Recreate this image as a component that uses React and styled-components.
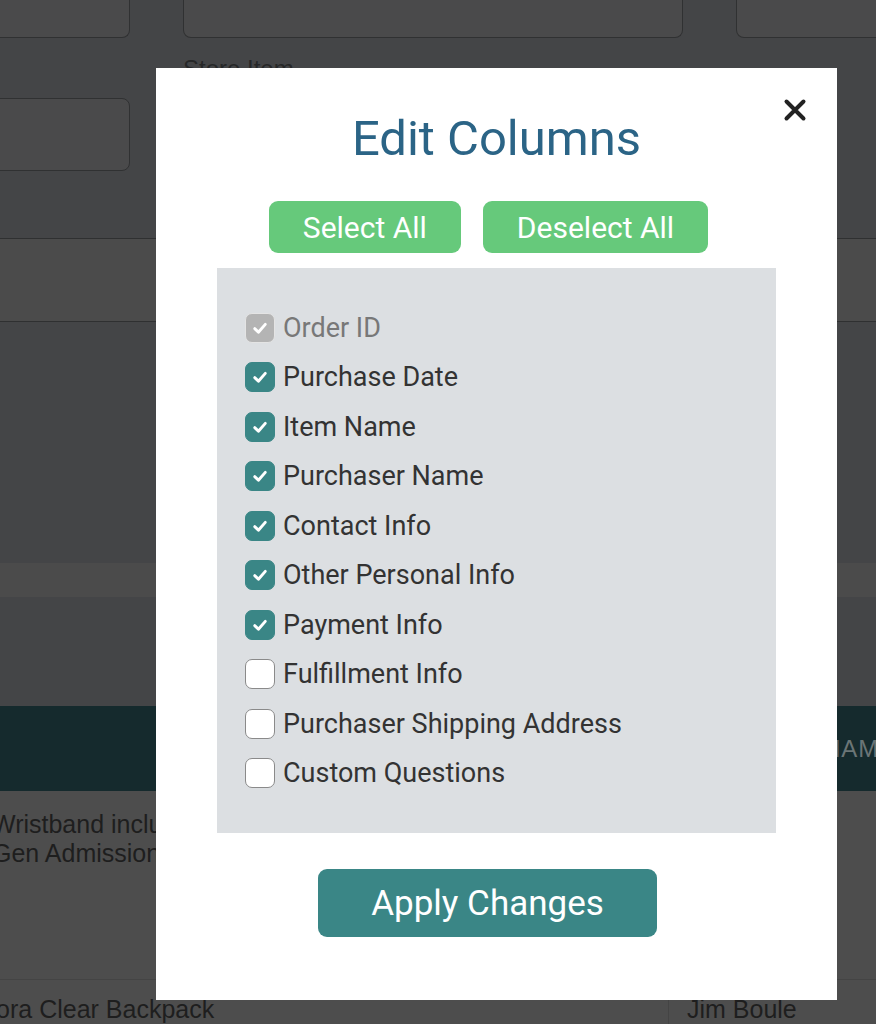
import styled, { createGlobalStyle } from "styled-components";
import { useState } from "react";

const GlobalStyle = createGlobalStyle`
  html, body {
    margin: 0;
    padding: 0;
    background: #444547;
    overflow: hidden;
  }
  * {
    box-sizing: border-box;
  }
`;

const COLUMNS = [
  { id: "orderId", label: "Order ID", locked: true },
  { id: "purchaseDate", label: "Purchase Date" },
  { id: "itemName", label: "Item Name" },
  { id: "purchaserName", label: "Purchaser Name" },
  { id: "contactInfo", label: "Contact Info" },
  { id: "otherPersonal", label: "Other Personal Info" },
  { id: "paymentInfo", label: "Payment Info" },
  { id: "fulfillment", label: "Fulfillment Info" },
  { id: "shipping", label: "Purchaser Shipping Address" },
  { id: "custom", label: "Custom Questions" },
];

const INITIAL = {
  orderId: true,
  purchaseDate: true,
  itemName: true,
  purchaserName: true,
  contactInfo: true,
  otherPersonal: true,
  paymentInfo: true,
  fulfillment: false,
  shipping: false,
  custom: false,
};

const CheckIcon = () => (
  <svg width="18" height="18" viewBox="0 0 16 16">
    <polyline
      points="3.3,8.6 6.6,11.7 12.7,4.8"
      fill="none"
      stroke="#fff"
      strokeWidth="2.6"
      strokeLinecap="round"
      strokeLinejoin="round"
    />
  </svg>
);

const App = () => {
  const [checked, setChecked] = useState(INITIAL);

  const toggle = (id) => {
    setChecked((prev) => ({ ...prev, [id]: !prev[id] }));
  };

  const setAll = (value) => {
    const next = {};
    COLUMNS.forEach((c) => (next[c.id] = c.locked ? true : value));
    setChecked(next);
  };

  return (
    <>
      <GlobalStyle />
      <Page>
        {/* 뒤쪽 페이지 (어둡게 가려진 상태) */}
        <FormRow>
          <Field $w="200px">
            <InputBox $h="38px" $cutTop />
          </Field>
          <Field $w="500px">
            <InputBox $h="38px" $cutTop />
          </Field>
          <Field $w="300px">
            <InputBox $h="38px" $cutTop />
          </Field>
        </FormRow>
        <FormRow $pt="14px">
          <Field $w="200px">
            <FieldLabel>&nbsp;</FieldLabel>
            <InputBox $h="73px" />
          </Field>
          <Field $w="500px">
            <FieldLabel>Store Item</FieldLabel>
            <InputBox $h="73px" />
          </Field>
          <Field $w="300px" />
        </FormRow>
        <Band $h="84px" $mt="67px" $lined />
        <Spacer $h="241px" />
        <Band $h="34px" />
        <Spacer $h="109px" />
        <Table>
          <HeadRow>
            <HeadCell $w="730px" />
            <HeadCell $pl="155px">NAME</HeadCell>
          </HeadRow>
          <BodyRow $h="189px">
            <Cell $w="730px" $pl="54px">
              Wristband includes
              <br />
              Gen Admission
            </Cell>
            <Cell />
          </BodyRow>
          <BodyRow $h="60px">
            <Cell $w="730px" $pt="15px" $pl="15px">
              Fedora Clear Backpack
            </Cell>
            <Cell $divider $pt="15px" $pl="18px">
              Jim Boule
            </Cell>
          </BodyRow>
        </Table>
      </Page>

      <Overlay>
        <Modal>
          <CloseBtn aria-label="close">
            <svg width="24" height="24" viewBox="0 0 24 24">
              <path
                d="M3.5 3.5 L20.5 20.5 M20.5 3.5 L3.5 20.5"
                stroke="#222"
                strokeWidth="4"
                strokeLinecap="round"
              />
            </svg>
          </CloseBtn>
          <Title>Edit Columns</Title>
          <BtnRow>
            <GreenBtn onClick={() => setAll(true)}>Select All</GreenBtn>
            <GreenBtn onClick={() => setAll(false)}>Deselect All</GreenBtn>
          </BtnRow>
          <Panel>
            {COLUMNS.map((c) => (
              <Option key={c.id} $disabled={c.locked}>
                <Box
                  $checked={checked[c.id]}
                  $disabled={c.locked}
                  onClick={() => !c.locked && toggle(c.id)}
                >
                  {checked[c.id] && <CheckIcon />}
                </Box>
                {c.label}
              </Option>
            ))}
          </Panel>
          <ApplyBtn>Apply Changes</ApplyBtn>
        </Modal>
      </Overlay>
    </>
  );
};

/* ===== 뒷 배경 ===== */

const Page = styled.div`
  width: 876px;
  height: 1024px;
  overflow: hidden;
  background: #444547;
  font-family: "Liberation Sans", Arial, sans-serif;
`;

const FormRow = styled.div`
  display: flex;
  gap: 53px;
  margin-left: -70px;
  padding-top: ${(p) => p.$pt || "0"};
`;

const Field = styled.div`
  flex: 0 0 ${(p) => p.$w};
  display: flex;
  flex-direction: column;
`;

const FieldLabel = styled.div`
  height: 46px;
  padding-top: 3px;
  font-size: 24px;
  color: #262728;
`;

const InputBox = styled.div`
  height: ${(p) => p.$h};
  background: #4a4a4b;
  border: 1px solid #303132;
  border-radius: 8px;
  ${(p) =>
    p.$cutTop &&
    `border-top: none; border-top-left-radius: 0; border-top-right-radius: 0;`}
`;

const Band = styled.div`
  height: ${(p) => p.$h};
  margin-top: ${(p) => p.$mt || "0"};
  background: #4b4b4b;
  border-top: ${(p) => (p.$lined ? "1px solid #2f3031" : "none")};
  border-bottom: ${(p) => (p.$lined ? "1px solid #2f3031" : "none")};
`;

const Spacer = styled.div`
  height: ${(p) => p.$h};
`;

const Table = styled.div`
  margin-left: -62px;
`;

const HeadRow = styled.div`
  display: flex;
  height: 85px;
  background: #152a2d;
`;

const HeadCell = styled.div`
  flex: ${(p) => (p.$w ? `0 0 ${p.$w}` : "1")};
  padding-left: ${(p) => p.$pl || "0"};
  display: flex;
  align-items: center;
  font-size: 24px;
  color: #6b7576;
  letter-spacing: 1px;
  white-space: nowrap;
  overflow: hidden;
`;

const BodyRow = styled.div`
  display: flex;
  height: ${(p) => p.$h};
  background: #4d4d4d;
  border-bottom: 1px solid #444;
`;

const Cell = styled.div`
  flex: ${(p) => (p.$w ? `0 0 ${p.$w}` : "1")};
  padding: ${(p) => p.$pt || "19px"} 0 0 ${(p) => p.$pl || "22px"};
  font-size: 25px;
  line-height: 29px;
  color: #1e1e1e;
  white-space: nowrap;
  overflow: hidden;
  border-left: ${(p) => (p.$divider ? "1px solid #444" : "none")};
`;

/* ===== 모달 ===== */

const Overlay = styled.div`
  position: fixed;
  inset: 0;
  font-family: Roboto, "Liberation Sans", sans-serif;
`;

const Modal = styled.div`
  position: absolute;
  left: 156px;
  top: 68px;
  width: 681px;
  height: 932px;
  background: #fff;
  display: flex;
  flex-direction: column;
  align-items: center;
  padding-top: 42px;
`;

const CloseBtn = styled.button`
  position: absolute;
  top: 30px;
  right: 30px;
  width: 24px;
  height: 24px;
  padding: 0;
  border: none;
  background: none;
  cursor: pointer;
  display: flex;
`;

const Title = styled.h1`
  margin: 0;
  font-size: 49px;
  line-height: 58px;
  font-weight: 400;
  color: #2b6486;
`;

const BtnRow = styled.div`
  display: flex;
  gap: 22px;
  margin-top: 33px;
  padding-right: 16px;
`;

const GreenBtn = styled.button`
  height: 52px;
  padding: 0 34px;
  border: none;
  border-radius: 9px;
  background: #66c97b;
  color: #fff;
  font-family: Roboto, sans-serif;
  font-size: 30px;
  cursor: pointer;
`;

const Panel = styled.div`
  width: 559px;
  margin-top: 15px;
  padding: 35px 28px;
  background: #dcdfe2;
  display: flex;
  flex-direction: column;
`;

const Option = styled.label`
  display: flex;
  align-items: center;
  gap: 8px;
  height: 49.5px;
  font-size: 27px;
  color: ${(p) => (p.$disabled ? "#787878" : "#333")};
`;

const Box = styled.span`
  flex: 0 0 30px;
  height: 30px;
  border-radius: 7px;
  display: flex;
  align-items: center;
  justify-content: center;
  cursor: ${(p) => (p.$disabled ? "default" : "pointer")};
  background: ${(p) =>
    p.$disabled ? "#b4b4b4" : p.$checked ? "#3a8686" : "#fff"};
  border: 1.5px solid
    ${(p) => (p.$disabled ? "#e4e4e4" : p.$checked ? "#3a8686" : "#8a8a8a")};
`;

const ApplyBtn = styled.button`
  margin-top: 36px;
  margin-right: 18px;
  height: 68px;
  padding: 0 53px;
  border: none;
  border-radius: 9px;
  background: #3a8686;
  color: #fff;
  font-family: Roboto, sans-serif;
  font-size: 35px;
  cursor: pointer;
`;

export default App;
